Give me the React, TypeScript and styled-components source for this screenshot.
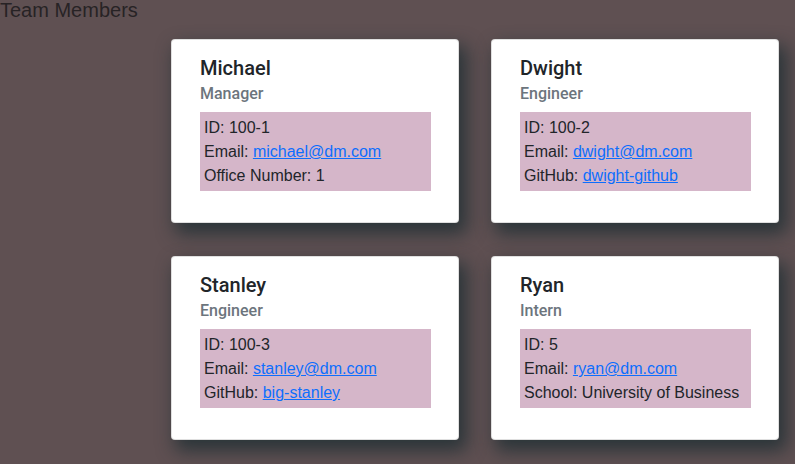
import React from "react";
import styled, { createGlobalStyle } from "styled-components";

const Global = createGlobalStyle`
  html, body { margin: 0; padding: 0; }
  body {
    background: #5f5052;
    font-family: "Liberation Sans", Arial, sans-serif;
    color: #212529;
    font-size: 16px;
    line-height: 1.5;
  }
`;

const Page = styled.div`
  min-height: 464px;
  overflow: hidden;
`;

const Heading = styled.h1`
  margin: 0;
  font-size: 20px;
  font-weight: 400;
  line-height: 20px;
  color: #272325;
`;

const Grid = styled.div`
  display: grid;
  grid-template-columns: repeat(2, 288px);
  column-gap: 32px;
  row-gap: 33px;
  padding: 19px 0 0 171px;
`;

const Card = styled.div`
  box-sizing: border-box;
  height: 184px;
  background: #fff;
  border: 1px solid rgba(0, 0, 0, 0.125);
  border-radius: 4px;
  padding: 16px 27px 16px 28px;
  box-shadow: 6px 9px 18px 2px rgba(40, 52, 56, 0.95);
`;

const Name = styled.h5`
  margin: 0 0 4px 0;
  font-family: Roboto, "Liberation Sans", sans-serif;
  font-size: 20px;
  font-weight: 500;
  line-height: 24px;
  color: #212529;
`;

const Role = styled.h6`
  margin: 0 0 8px 0;
  font-family: Roboto, "Liberation Sans", sans-serif;
  font-size: 16px;
  font-weight: 500;
  line-height: 20px;
  color: #6c757d;
`;

const Info = styled.ul`
  list-style: none;
  margin: 0;
  padding: 4px 4px 3px 4px;
  background: #d5b6c9;
`;

const Item = styled.li`
  line-height: 24px;
  font-size: 16px;
  color: #212529;
  white-space: nowrap;
`;

const Link = styled.a`
  color: #0d6efd;
  text-decoration: underline;
`;

type Member = {
  name: string;
  role: string;
  id: string;
  email: string;
  extraLabel: string;
  extraValue: string;
  extraLink?: boolean;
};

const members: Member[] = [
  { name: "Michael", role: "Manager", id: "100-1", email: "michael@dm.com", extraLabel: "Office Number", extraValue: "1" },
  { name: "Dwight", role: "Engineer", id: "100-2", email: "dwight@dm.com", extraLabel: "GitHub", extraValue: "dwight-github", extraLink: true },
  { name: "Stanley", role: "Engineer", id: "100-3", email: "stanley@dm.com", extraLabel: "GitHub", extraValue: "big-stanley", extraLink: true },
  { name: "Ryan", role: "Intern", id: "5", email: "ryan@dm.com", extraLabel: "School", extraValue: "University of Business" },
];

export default function App() {
  return (
    <Page>
      <Global />
      <Heading>Team Members</Heading>
      <Grid>
        {members.map((m) => (
          <Card key={m.name}>
            <Name>{m.name}</Name>
            <Role>{m.role}</Role>
            <Info>
              <Item>ID: {m.id}</Item>
              <Item>
                Email: <Link href={`mailto:${m.email}`}>{m.email}</Link>
              </Item>
              <Item>
                {m.extraLabel}:{" "}
                {m.extraLink ? <Link href="#">{m.extraValue}</Link> : m.extraValue}
              </Item>
            </Info>
          </Card>
        ))}
      </Grid>
    </Page>
  );
}
